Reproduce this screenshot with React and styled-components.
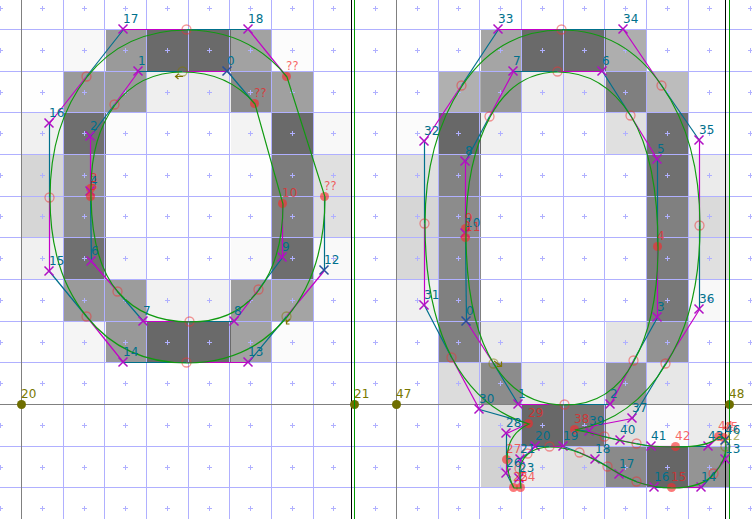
import React from "react";
import styled, { createGlobalStyle } from "styled-components";

const GlobalStyle = createGlobalStyle`
  body {
    margin: 0;
    background: #ffffff;
  }
`;

const EditorView = styled.main`
  width: 100%;
  overflow: hidden;
  background: #ffffff;
`;

const OutlineCanvas = styled.svg`
  display: block;
  width: 100%;
  height: auto;
`;

const GridLine = styled.path`
  fill: none;
  stroke: ${(p) => p.$color};
  stroke-width: 1;
`;

const Outline = styled.path`
  fill: none;
  stroke: #109a10;
  stroke-width: 1.2;
`;

const Handle = styled.path`
  fill: none;
  stroke: ${(p) => (p.$kind === "in" ? "#00708c" : "#c400c8")};
  stroke-width: 1.2;
`;

const ControlCross = styled.path`
  fill: none;
  stroke: ${(p) => (p.$first ? "#28509c" : "#b010c4")};
  stroke-width: 1.5;
`;

const SmoothPoint = styled.circle`
  fill: none;
  stroke: ${(p) => (p.$start ? "rgba(128, 120, 0, 0.5)" : "rgba(240, 50, 50, 0.5)")};
  stroke-width: 1.3;
`;

const CornerPoint = styled.circle`
  fill: rgba(250, 40, 40, 0.62);
`;

const MetricPoint = styled.circle`
  fill: #6e6e00;
`;

const labelColors = {
  control: "#00708c",
  corner: "rgba(245, 25, 25, 0.68)",
  start: "rgba(128, 128, 0, 0.6)",
  metric: "#787800",
};

const PointLabel = styled.text`
  font-family: "DejaVu Sans", sans-serif;
  font-size: 12px;
  fill: ${(p) => labelColors[p.$kind]};
`;

const StartArrow = styled.path`
  fill: none;
  stroke: #7c7400;
  stroke-width: 1.2;
`;

const WIDTH = 752;
const HEIGHT = 519;

const columnEdges = [22, 64, 106, 147, 189, 231, 272, 314, 355];
const rowEdges = [30, 72, 113, 155, 197, 238, 280, 322, 363, 405, 447, 488];

// Coverage of each pixel, as a two-digit grey level; ".." is empty.
const rasters = [
  {
    dx: 0,
    right: 352,
    rows: [
      ".. f8 9a 6a 6a a2 fc ..",
      "fe 9a 9a ef eb 8a a0 ..",
      "f0 6f fc .. .. f3 6a f8",
      "d6 8f .. .. .. fe 7c e0",
      "d6 8c .. .. .. .. 80 e0",
      "f0 70 f8 .. .. fa 6e f9",
      ".. 9a 9c f2 f2 9c a4 fe",
      ".. f5 99 68 6a a2 fb ..",
    ],
  },
  {
    dx: 375,
    right: 730,
    rows: [
      ".. fe a5 6a 6c ae .. ..",
      ".. b0 96 ee e9 7f bc ..",
      "fb 68 f0 .. .. e0 6f fe",
      "e0 82 .. .. .. .. 70 eb",
      "d6 8c .. .. .. .. 80 da",
      "d8 8a .. .. .. .. 7b e0",
      "f0 80 .. .. .. .. 78 f8",
      ".. 80 eb .. .. e4 92 ..",
      ".. dc 8c ea f0 92 e7 ..",
      ".. .. dc 68 75 e0 fd eb",
      ".. .. d2 eb d8 8a 66 94",
    ],
  },
];

// Point kinds: x = control, o = smooth, c = corner, s = contour start.
const contours = [
  [
    ["s", 182, 71], ["x", 138, 71, "1"], ["o", 114, 104], ["x", 90, 136, "2"],
    ["c", 90, 188, "3"], ["x", 90, 191, "4"], ["c", 90, 196, "5"],
    ["x", 91, 261, "6"], ["o", 117, 291], ["x", 143, 321, "7"],
    ["o", 189, 321], ["x", 234, 321, "8"], ["o", 258, 289],
    ["x", 282, 257, "9"], ["c", 282, 203, "10"], ["c", 254, 103, "??"],
    ["x", 227, 71, "0", true],
  ],
  [
    ["s", 286, 316], ["x", 248, 362, "13"], ["o", 186, 362],
    ["x", 123, 362, "14"], ["o", 86, 316], ["x", 49, 271, "15"],
    ["o", 49, 197], ["x", 49, 123, "16"], ["o", 86, 76],
    ["x", 123, 29, "17"], ["o", 186, 29], ["x", 248, 29, "18"],
    ["c", 286, 76, "??"], ["c", 324, 196, "??"], ["x", 324, 270, "12", true],
  ],
  [
    ["s", 493, 363], ["x", 518, 404, "1"], ["o", 564, 404],
    ["x", 610, 404, "2"], ["o", 633, 360], ["x", 657, 317, "3"],
    ["c", 657, 246, "4"], ["x", 657, 159, "5"], ["o", 630, 115],
    ["x", 602, 71, "6"], ["o", 557, 71], ["x", 513, 71, "7"],
    ["o", 489, 116], ["x", 465, 161, "8"], ["c", 465, 228, "9"],
    ["x", 465, 233, "10"], ["c", 465, 237, "11"], ["x", 466, 321, "0", true],
  ],
  [
    ["s", 725, 446, "12"], ["x", 725, 459, "13"], ["o", 713, 473],
    ["x", 701, 487, "14"], ["c", 671, 487, "15"], ["x", 654, 487, "16"],
    ["o", 636, 481], ["x", 619, 474, "17"], ["o", 607, 466],
    ["x", 595, 459, "18"], ["o", 579, 452], ["x", 563, 446, "19"],
    ["o", 549, 446], ["x", 535, 446, "20"], ["o", 527, 453],
    ["x", 520, 459, "21"], ["o", 519, 468], ["x", 519, 478, "23"],
    ["c", 520, 487, "24"], ["c", 513, 487, "25"], ["x", 506, 473, "26"],
    ["c", 506, 459, "27"], ["x", 506, 433, "28"], ["c", 528, 423, "29"],
    ["x", 479, 409, "30"], ["o", 451, 357], ["x", 424, 305, "31"],
    ["o", 424, 223], ["x", 424, 141, "32"], ["o", 461, 85],
    ["x", 498, 29, "33"], ["o", 561, 29], ["x", 623, 29, "34"],
    ["o", 661, 85], ["x", 699, 140, "35"], ["o", 699, 225],
    ["x", 699, 309, "36"], ["o", 665, 363], ["x", 632, 418, "37"],
    ["c", 574, 429, "38"], ["x", 589, 431, "39"], ["o", 604, 436],
    ["x", 620, 440, "40"], ["o", 636, 443], ["x", 651, 446, "41"],
    ["c", 675, 446, "42"], ["x", 708, 446, "43"], ["c", 718, 436, "44"],
    ["c", 723, 437, "45"], ["x", 725, 440, "46", true],
  ],
];

const metricPoints = [[21, "20"], [354, "21"], [396, "47"], [729, "48"]];

const startArrows = [
  "M183 76.5H176M178.5 74l-3 2.5 3 2.5",
  "M290 319l-4 4M286.5 319.5v4.5h3",
  "M494 361l7 5M501.5 361.5v5h-4.5",
];

const steps = (origin, limit) => {
  const pitch = 125 / 3;
  const first = Math.ceil(-origin / pitch);
  const out = [];
  for (let k = first; origin + k * pitch < limit; k += 1) {
    out.push(Math.round(origin + k * pitch));
  }
  return out;
};

const isPlainColumn = (x) => ![21, 354, 396, 729].includes(x);
const gridPath =
  steps(21, WIDTH).filter(isPlainColumn).map((x) => `M${x + 0.5} 0V${HEIGHT}`).join("") +
  steps(29, HEIGHT).filter((y) => y !== 404).map((y) => `M0 ${y + 0.5}H${WIDTH}`).join("");

const centresPath = steps(21 + 125 / 6, WIDTH)
  .flatMap((x) =>
    steps(29 - 125 / 6, HEIGHT).map((y) => `M${x - 2} ${y + 0.5}h5M${x + 0.5} ${y - 2}v5`)
  )
  .join("");

const outlinePath = (points) => {
  const at = (p) => `${p[1] + 1} ${p[2] + 1}`;
  let d = `M${at(points[0])}`;
  for (let i = 1; i < points.length; i += 1) {
    const p = points[i];
    if (p[0] === "x") {
      d += `Q${at(p)} ${at(points[(i + 1) % points.length])}`;
      i += 1;
    } else {
      d += `L${at(p)}`;
    }
  }
  return d;
};

function Raster({ raster }) {
  return raster.rows.flatMap((row, r) =>
    row.split(" ").map((level, c) => {
      if (level === "..") return null;
      const x = columnEdges[c] + raster.dx;
      const end = Math.min(columnEdges[c + 1] + raster.dx, raster.right);
      return (
        <rect
          key={`${r}-${c}`}
          x={x}
          y={rowEdges[r]}
          width={end - x}
          height={rowEdges[r + 1] - rowEdges[r]}
          fill={`#${level}${level}${level}`}
        />
      );
    })
  );
}

function Handles({ points }) {
  return points.map((p, i) => {
    if (p[0] !== "x") return null;
    const before = points[i - 1];
    const after = points[(i + 1) % points.length];
    const line = (q) => `M${p[1] + 0.5} ${p[2] + 0.5}L${q[1] + 0.5} ${q[2] + 0.5}`;
    return (
      <g key={i}>
        <Handle $kind="in" d={line(before)} />
        <Handle $kind="out" d={line(after)} />
      </g>
    );
  });
}

function Marker({ point }) {
  const [kind, x, y, , first] = point;
  if (kind === "x") {
    return (
      <ControlCross
        $first={first}
        d={`M${x - 4.5} ${y - 4.5}l9 9M${x + 4.5} ${y - 4.5}l-9 9`}
      />
    );
  }
  if (kind === "c") return <CornerPoint cx={x + 0.5} cy={y + 0.5} r={4.5} />;
  return <SmoothPoint $start={kind === "s"} cx={x + 0.5} cy={y + 0.5} r={4.5} />;
}

function Contour({ points }) {
  return (
    <g>
      <Handles points={points} />
      {points.map((p, i) => (
        <Marker key={i} point={p} />
      ))}
      <Outline d={outlinePath(points)} />
      {points.map((p, i) =>
        p[3] ? (
          <PointLabel
            key={i}
            x={p[1]}
            y={p[2] - 6}
            $kind={p[0] === "x" ? "control" : p[0] === "s" ? "start" : "corner"}
          >
            {p[3]}
          </PointLabel>
        ) : null
      )}
    </g>
  );
}

export default function App() {
  return (
    <>
      <GlobalStyle />
      <EditorView>
        <OutlineCanvas viewBox={`0 0 ${WIDTH} ${HEIGHT}`} role="img" aria-label="Glyph outlines on the pixel grid">
          {rasters.map((raster) => (
            <Raster key={raster.dx} raster={raster} />
          ))}
          <GridLine $color="#b0b0ff" d={gridPath} />
          <GridLine $color="#b0b0ff" d={centresPath} />
          <GridLine $color="#808080" d={`M21.5 0V${HEIGHT}M396.5 0V${HEIGHT}M0 404.5H${WIDTH}`} />
          <GridLine $color="#000000" d={`M351.5 0V${HEIGHT}M725.5 0V${HEIGHT}`} />
          {metricPoints.map(([x, label]) => (
            <g key={label}>
              <MetricPoint cx={x + 0.5} cy={404.5} r={4.5} />
              <PointLabel x={x} y={398} $kind="metric">
                {label}
              </PointLabel>
            </g>
          ))}
          <GridLine $color="#009600" d={`M354.5 0V${HEIGHT}M729.5 0V${HEIGHT}`} />
          {contours.map((points, i) => (
            <Contour key={i} points={points} />
          ))}
          {startArrows.map((d) => (
            <StartArrow key={d} d={d} />
          ))}
        </OutlineCanvas>
      </EditorView>
    </>
  );
}
